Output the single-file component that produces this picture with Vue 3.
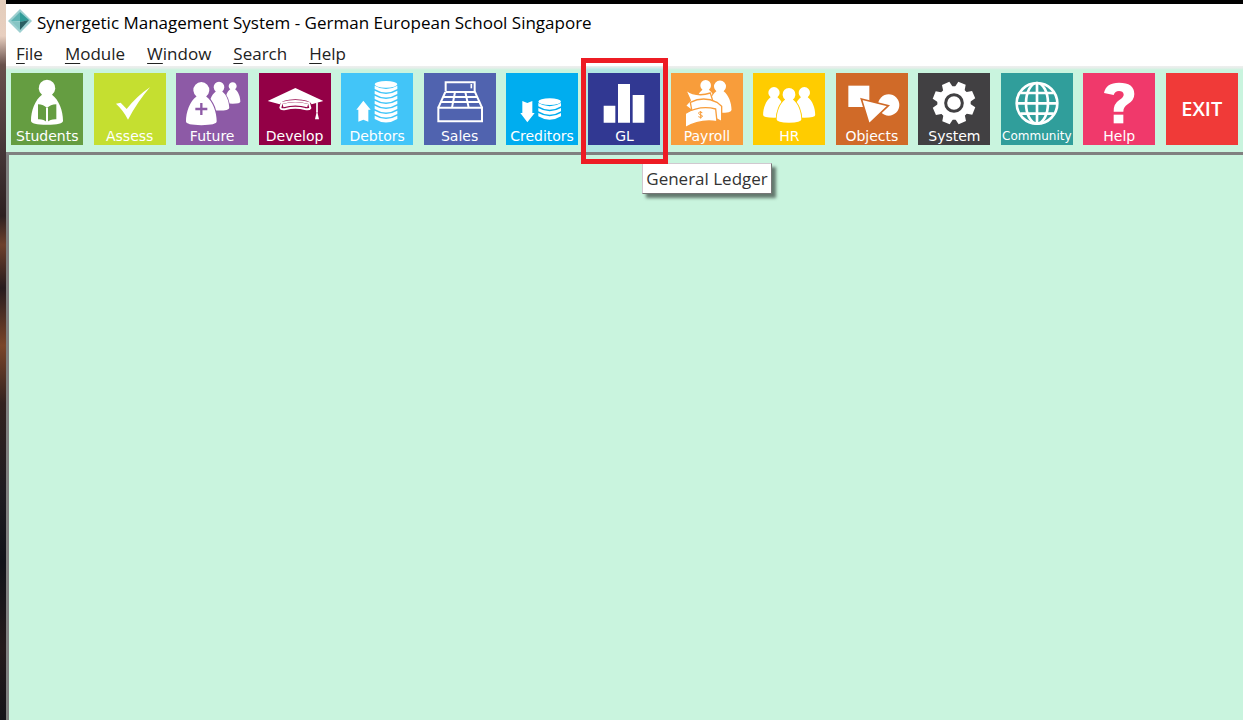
<!-- App.vue - main window with module toolbar -->
<template>
  <div class="desktop">
    <div class="window">
      <header class="title-bar">
        <svg class="logo" viewBox="0 0 24 24" aria-hidden="true">
          <path d="M12 0 24 12 12 24 0 12Z" fill="#9ccfd0" />
          <path d="M12 3 3 12 12 12Z" fill="#5fb3b3" />
          <path d="M12 3 21 11 12 13Z" fill="#2f9c98" />
          <path d="M3 12 12 13 12 21Z" fill="#86c5c4" />
          <path d="M12 13 21 11 12 21Z" fill="#2a5f63" />
        </svg>
        <h1>Synergetic Management System - German European School Singapore</h1>
      </header>

      <nav class="menu-bar">
        <button v-for="item in menus" :key="item" type="button" class="menu-item">
          <u>{{ item[0] }}</u>{{ item.slice(1) }}
        </button>
      </nav>

      <div class="toolbar">
        <div
          v-for="mod in modules"
          :key="mod.id"
          class="cell"
          :class="{ active: mod.id === activeModule }"
        >
          <button type="button" class="tile" :class="mod.id" @click="activeModule = mod.id">
            <svg v-if="mod.icon" class="icon" viewBox="0 0 216 216" aria-hidden="true" v-html="mod.icon"></svg>
            <span class="label">{{ mod.label }}</span>
          </button>
          <template v-if="mod.id === activeModule">
            <span class="frame"></span>
            <span v-if="mod.hint" class="tooltip" role="tooltip">{{ mod.hint }}</span>
          </template>
        </div>
      </div>

      <main class="workspace"></main>
    </div>
  </div>
</template>

<script setup>
import { ref } from 'vue'

const menus = ['File', 'Module', 'Window', 'Search', 'Help']

const activeModule = ref('gl')

// Head and shoulders, origin in the centre of the head
const person = (x, y, s, stroke = 'none') =>
  `<g transform="translate(${x} ${y}) scale(${s})" fill="#fff" stroke="${stroke}" stroke-width="7" paint-order="stroke">
    <path d="M-15 19A25 25 0 1 1 15 19C36 34 48 68 48 97Q48 109 0 109Q-48 109-48 97C-48 68-36 34-15 19Z"/>
  </g>`

// Stack of coins, the top one is a full ellipse
const coins = (x, y, count) => {
  let out = `<ellipse cx="${x}" cy="${y}" rx="34" ry="10" fill="#fff"/>`
  for (let i = 1; i < count; i++) {
    const top = y - 11 + i * 15
    out += `<path d="M${x - 34} ${top}Q${x} ${top + 20} ${x + 34} ${top}V${top + 10}Q${x} ${top + 31} ${x - 34} ${top + 10}Z" fill="#fff"/>`
  }
  return out
}

const modules = [
  {
    id: 'students',
    label: 'Students',
    icon: person(108, 46, 1) +
      '<path d="M81 94Q98 95 108 105Q118 95 136 94V139Q118 138 108 148Q98 138 81 139Z" fill="#659d41"/>' +
      '<path d="M108 105V147" stroke="#fff" stroke-width="6"/>'
  },
  {
    id: 'assess',
    label: 'Assess',
    icon: '<path d="M66 92 80 89 98 108Q130 68 168 43Q132 84 102 140Q88 112 66 92Z" fill="#fff"/>'
  },
  {
    id: 'future',
    label: 'Future',
    icon: person(170, 40, 0.48) + person(129, 43, 0.64, '#8d5aa6') + person(76, 52, 0.96, '#8d5aa6') +
      '<path d="M76 90V126M58 108H94" stroke="#8d5aa6" stroke-width="7"/>'
  },
  {
    id: 'develop',
    label: 'Develop',
    icon: '<path d="M26 84 109 45 193 84 158 94Q153 80 109 79Q67 80 62 94Z" fill="#fff"/>' +
      '<path d="M68 90Q109 78 150 90L154 105Q151 111 138 108Q109 100 80 108Q66 111 64 104Z" fill="#930046" stroke="#fff" stroke-width="6"/>' +
      '<path d="M72 98Q109 87 146 98" fill="none" stroke="#fff" stroke-width="10"/>' +
      '<path d="M174 88V118" stroke="#fff" stroke-width="5"/><path d="M174 112 180 139H168Z" fill="#fff"/>'
  },
  {
    id: 'debtors',
    label: 'Debtors',
    icon: coins(135, 34, 8) + '<path d="M46 110 67 83 89 110H82V146L67 140 52 146V110Z" fill="#fff"/>'
  },
  {
    id: 'sales',
    label: 'Sales',
    icon: '<g fill="none" stroke="#fff" stroke-width="6">' +
      '<path d="M65 54V28H152V54"/><path d="M43 104H174V145H43Z"/>' +
      '<path d="M64 57H153L174 104M64 57 43 104M58 72H159M51 87H166"/>' +
      '<path d="M93 57 84 104M124 57 134 104"/></g>' +
      '<path d="M142 33V46" stroke="#fff" stroke-width="5"/>'
  },
  {
    id: 'creditors',
    label: 'Creditors',
    icon: coins(131, 86, 4) + '<path d="M49 84 64 90 79 84V120H86L64 148 43 120H49Z" fill="#fff"/>'
  },
  {
    id: 'gl',
    label: 'GL',
    hint: 'General Ledger',
    icon: '<path d="M47 98H82V149H47ZM90 33H126V149H90ZM134 66H169V149H134Z" fill="#fff"/>'
  },
  {
    id: 'payroll',
    label: 'Payroll',
    icon: person(104, 38, 0.64) + person(147, 41, 0.72, '#f89d3b') +
      '<g fill="#fff" stroke="#f89d3b" stroke-width="4">' +
      '<path d="M44 50Q76 74 118 60L130 98 62 112 44 98 58 82Z"/>' +
      '<path d="M58 88Q98 68 138 88L152 100V146Q104 116 66 132Z"/>' +
      '<path d="M43 121Q87 96 134 108L138 146Q86 138 43 164Z"/></g>' +
      '<path d="M94 119Q82 115 83 121Q84 125 90 126Q97 128 93 132Q89 135 82 131M89 114V137" fill="none" stroke="#f89d3b" stroke-width="3"/>'
  },
  {
    id: 'hr',
    label: 'HR',
    icon: person(63, 60, 0.68) + person(154, 60, 0.68) + person(108, 65, 0.77, '#ffcc00')
  },
  {
    id: 'objects',
    label: 'Objects',
    icon: '<path d="M37 38H100V102H37Z" fill="#fff"/><circle cx="158" cy="96" r="32" fill="#fff"/>' +
      '<path d="M76 78 157 98 99 153Z" fill="#fff" stroke="#d06a28" stroke-width="5"/>'
  },
  {
    id: 'system',
    label: 'System',
    icon: '<g fill="#fff"><circle cx="108" cy="90" r="50"/>' +
      [22, 67, 112, 157, 202, 247, 292, 337]
        .map((a) => `<path d="M92 46 96 26H120L124 46Z" transform="rotate(${a} 108 90)"/>`)
        .join('') +
      '</g><circle cx="108" cy="90" r="25" fill="none" stroke="#414042" stroke-width="9"/>'
  },
  {
    id: 'community',
    label: 'Community',
    icon: '<g fill="none" stroke="#fff" stroke-width="8"><circle cx="108" cy="91" r="61"/>' +
      '<ellipse cx="108" cy="91" rx="33" ry="61"/>' +
      '<path d="M108 30V152M47 91H169M58 60H158M58 122H158"/></g>'
  },
  {
    id: 'help',
    label: 'Help',
    icon: '<path d="M63 60Q69 29 108 29Q154 29 154 63Q154 82 134 94Q121 102 121 116H92Q91 93 108 82Q123 73 122 64Q120 54 108 54Q96 54 92 66Z" fill="#fff"/>' +
      '<path d="M92 125H121V151H92Z" fill="#fff"/>'
  },
  { id: 'exit', label: 'EXIT' }
]
</script>

<style>
body {
  margin: 0;
}
</style>

<style scoped>
.desktop {
  box-sizing: border-box;
  min-height: 100vh;
  padding-left: 6px;
  display: flex;
  background: linear-gradient(
    #e3cdbb 0,
    #e8cfc0 5%,
    #68504c 9%,
    #48383a 20%,
    #2d2020 30%,
    #6d402c 34%,
    #271b1d 40%,
    #7a452a 48%,
    #33221f 56%,
    #1f1c21 68%,
    #111319 78%,
    #241a1b 90%,
    #151318 100%
  );
  font-family: "Open Sans", "Noto Sans", sans-serif;
  color: #000;
}

.window {
  flex: 1;
  min-width: 0;
  display: flex;
  flex-direction: column;
  border-top: 4px solid #000;
  background: #fff;
}

.title-bar {
  display: flex;
  align-items: flex-end;
  gap: 5px;
  height: 31px;
  padding: 0 0 6px 2px;
}

.logo {
  width: 24px;
  height: 24px;
  margin-bottom: 2px;
}

h1 {
  margin: 0;
  font-size: 17px;
  line-height: 24px;
  font-weight: 400;
  white-space: nowrap;
}

.menu-bar {
  display: flex;
  gap: 22px;
  height: 25px;
  padding-left: 10px;
}

.menu-item {
  padding: 0;
  border: 0;
  background: none;
  font: inherit;
  font-size: 17px;
  line-height: 26px;
  color: #222;
}

.menu-item u {
  text-underline-offset: 3px;
}

.toolbar {
  display: grid;
  grid-template-columns: repeat(15, minmax(0, 1fr));
  background: linear-gradient(#efefef 0, #e6eeea 2px, #c9f4de 4px);
}

.cell {
  position: relative;
  display: flex;
  justify-content: center;
  padding: 7px 0;
}

.cell.active {
  background: linear-gradient(#efefef 0, #b0e6e2 4px);
}

.tile {
  position: relative;
  width: 72px;
  height: 72px;
  padding: 0;
  border: 0;
  display: flex;
  flex-direction: column;
  justify-content: flex-end;
  color: #fff;
  font-family: "DejaVu Sans", sans-serif;
  font-size: 14px;
}

/* The icon is drawn on the whole tile, under the label */
.icon {
  position: absolute;
  inset: 0;
  width: 100%;
  height: 100%;
}

.label {
  position: relative;
  line-height: 18px;
  text-align: center;
}

.students { background: #659d41; }
.assess { background: #c5df30; }
.future { background: #8d5aa6; }
.develop { background: #930046; }
.debtors { background: #42c5f8; }
.sales { background: #5063af; }
.creditors { background: #00adef; }
.gl { background: #313892; }
.payroll { background: #f89d3b; }
.hr { background: #ffcc00; }
.objects { background: #d06a28; }
.system { background: #414042; }
.community { background: #309e9b; }
.help { background: #f0396b; }

.community .label {
  font-size: 12px;
}

.exit {
  justify-content: center;
  background: #f03a38;
  font-family: "Open Sans", sans-serif;
  font-size: 20px;
  font-weight: 600;
}

.exit .label {
  line-height: 24px;
}

.frame {
  position: absolute;
  inset: -8px -2px -12px;
  z-index: 2;
  border: 5px solid #ed1c24;
  pointer-events: none;
}

.tooltip {
  position: absolute;
  top: 97px;
  left: 59px;
  z-index: 1;
  padding: 0 3px;
  border: 1px solid #767676;
  border-top-color: #d0c8d0;
  border-left-color: #d0c8d0;
  background: #fff;
  box-shadow: 4px 4px 3px rgba(0, 0, 0, 0.5);
  font-size: 17px;
  line-height: 29px;
  color: #333;
  white-space: nowrap;
}

.workspace {
  flex: 1;
  border-top: 3px solid #808080;
  border-left: 3px solid #808080;
  background: #c9f4de;
}
</style>
